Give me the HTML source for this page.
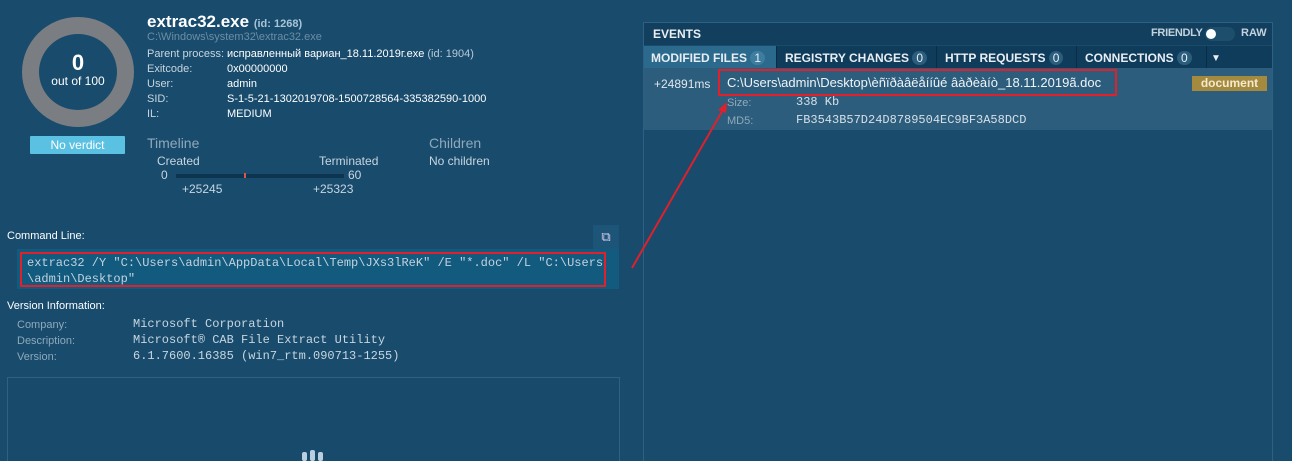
<!DOCTYPE html>
<html><head><meta charset="utf-8"><style>
*{margin:0;padding:0;box-sizing:border-box}
html,body{width:1292px;height:461px;overflow:hidden}
body{background:#184b6c;font-family:"Liberation Sans",sans-serif;color:#fff;position:relative;font-size:12px}
.a{position:absolute;white-space:nowrap}
.m{font-family:"Liberation Mono",monospace}
.lbl{color:#c8d6e0}
.grey{color:#8fa9bb}
</style></head><body>
<div class="a" style="left:22px;top:17px;width:112px;height:110px;border-radius:50%;border:17px solid #7a7e82"></div>
<div class="a" style="left:22px;top:50px;width:112px;text-align:center;font-size:22px;font-weight:bold">0</div>
<div class="a" style="left:22px;top:74px;width:112px;text-align:center;font-size:12px">out of 100</div>
<div class="a" style="left:30px;top:136px;width:95px;height:18px;background:#5bc1e2;text-align:center;font-size:12px;line-height:18px;border-radius:1px">No verdict</div>

<div class="a" style="left:147px;top:12px;font-size:17px;font-weight:bold">extrac32.exe <span style="font-size:11px;color:#a9c4d6">(id: 1268)</span></div>
<div class="a" style="left:147px;top:31px;font-size:11px;color:#6d8ea5">C:\Windows\system32\extrac32.exe</div>
<div class="a lbl" style="left:147px;top:47px;font-size:11px;line-height:15px">Parent process:<br>Exitcode:<br>User:<br>SID:<br>IL:</div>
<div class="a" style="left:227px;top:47px;font-size:11px;line-height:15px">исправленный вариан_18.11.2019г.exe <span style="color:#b8cbd8">(id: 1904)</span><br>0x00000000<br>admin<br>S-1-5-21-1302019708-1500728564-335382590-1000<br>MEDIUM</div>

<div class="a grey" style="left:147px;top:135px;font-size:14px">Timeline</div>
<div class="a grey" style="left:429px;top:135px;font-size:14px">Children</div>
<div class="a lbl" style="left:429px;top:154px;font-size:12px">No children</div>
<div class="a lbl" style="left:157px;top:154px;font-size:12px">Created</div>
<div class="a lbl" style="left:319px;top:154px;font-size:12px">Terminated</div>
<div class="a lbl" style="left:161px;top:168px;font-size:12px">0</div>
<div class="a lbl" style="left:348px;top:168px;font-size:12px">60</div>
<div class="a" style="left:176px;top:174px;width:168px;height:4px;background:#0e3550"></div>
<div class="a" style="left:244px;top:173px;width:2px;height:5px;background:#e0544a"></div>
<div class="a lbl" style="left:182px;top:182px;font-size:12px">+25245</div>
<div class="a lbl" style="left:313px;top:182px;font-size:12px">+25323</div>

<div class="a" style="left:7px;top:230px;font-size:11px">Command Line:</div>
<div class="a" style="left:593px;top:225px;width:26px;height:24px;background:#1c5578;color:#dce;text-align:center;line-height:24px;font-size:13px">⧉</div>
<div class="a" style="left:17px;top:249px;width:602px;height:40px;background:#135b7e"></div>
<div class="a" style="left:20px;top:252px;width:586px;height:35px;border:2px solid #e0202a"></div>
<div class="a m" style="left:27px;top:255px;font-size:12px;line-height:16px;color:#c2d2de">extrac32 /Y "C:\Users\admin\AppData\Local\Temp\JXs3lReK" /E "*.doc" /L "C:\Users<br>\admin\Desktop"</div>

<div class="a" style="left:7px;top:300px;font-size:11px">Version Information:</div>
<div class="a grey" style="left:17px;top:317px;font-size:11px;line-height:16px">Company:<br>Description:<br>Version:</div>
<div class="a m lbl" style="left:133px;top:316px;font-size:12px;line-height:16px">Microsoft Corporation<br>Microsoft® CAB File Extract Utility<br>6.1.7600.16385 (win7_rtm.090713-1255)</div>
<div class="a" style="left:7px;top:377px;width:613px;height:100px;border:1px solid #2d6283;background:#174a6b"></div>
<div class="a" style="left:302px;top:452px;width:5px;height:9px;background:#b9cede;border-radius:2px"></div>
<div class="a" style="left:310px;top:450px;width:5px;height:11px;background:#b9cede;border-radius:2px"></div>
<div class="a" style="left:318px;top:452px;width:5px;height:9px;background:#b9cede;border-radius:2px"></div>

<div class="a" style="left:643px;top:22px;width:630px;height:450px;border:1px solid #2c6183;background:#184b6c"></div>
<div class="a" style="left:644px;top:23px;width:628px;height:22px;background:#133f5e"></div>
<div class="a" style="left:653px;top:27px;font-size:12px;font-weight:bold;color:#e8eef3">EVENTS</div>
<div class="a" style="left:1151px;top:27px;font-size:11px;font-weight:bold;color:#c3d2dc;letter-spacing:-0.3px">FRIENDLY</div>
<div class="a" style="left:1205px;top:27px;width:30px;height:14px;border-radius:7px;background:#1d4f6d"></div>
<div class="a" style="left:1206px;top:29px;width:10px;height:10px;border-radius:50%;background:#fff"></div>
<div class="a" style="left:1241px;top:27px;font-size:11px;font-weight:bold;color:#c3d2dc">RAW</div>
<div class="a" style="left:644px;top:46px;width:628px;height:22px;background:#0f3c5b"></div>
<div class="a" style="left:644px;top:46px;width:132px;height:22px;background:#2b6a8c"></div>
<div class="a" style="left:776px;top:46px;width:1px;height:22px;background:#0a2c44"></div>
<div class="a" style="left:936px;top:46px;width:1px;height:22px;background:#0a2c44"></div>
<div class="a" style="left:1076px;top:46px;width:1px;height:22px;background:#0a2c44"></div>
<div class="a" style="left:1206px;top:46px;width:1px;height:22px;background:#0a2c44"></div>
<div class="a" style="left:651px;top:51px;font-size:12px;font-weight:bold;color:#e8eef3">MODIFIED FILES <span style="display:inline-block;background:#3d7da0;border-radius:7px;padding:0 4px;font-weight:normal">1</span></div>
<div class="a" style="left:785px;top:51px;font-size:12px;font-weight:bold;color:#e8eef3">REGISTRY CHANGES <span style="display:inline-block;background:#2b5d7d;border-radius:7px;padding:0 4px;font-weight:normal">0</span></div>
<div class="a" style="left:945px;top:51px;font-size:12px;font-weight:bold;color:#e8eef3">HTTP REQUESTS <span style="display:inline-block;background:#2b5d7d;border-radius:7px;padding:0 4px;font-weight:normal">0</span></div>
<div class="a" style="left:1085px;top:51px;font-size:12px;font-weight:bold;color:#e8eef3">CONNECTIONS <span style="display:inline-block;background:#2b5d7d;border-radius:7px;padding:0 4px;font-weight:normal">0</span></div>
<div class="a" style="left:1211px;top:53px;font-size:10px;color:#e8eef3">▼</div>
<div class="a" style="left:644px;top:68px;width:628px;height:62px;background:#2d5d7c"></div>
<div class="a" style="left:654px;top:77px;font-size:12px;color:#e0e8ee">+24891ms</div>
<div class="a" style="left:718px;top:69px;width:399px;height:27px;border:2px solid #e0202a"></div>
<div class="a" style="left:727px;top:75px;font-size:13px;color:#f0f4f7">C:\Users\admin\Desktop\èñïðàâëåííûé âàðèàíò_18.11.2019ã.doc</div>
<div class="a" style="left:1192px;top:76px;width:75px;height:15px;background:#a48a3e;text-align:center;font-size:12px;line-height:15px;font-weight:bold;color:#f3ead0">document</div>
<div class="a grey" style="left:727px;top:94px;font-size:11px;line-height:18px">Size:<br>MD5:</div>
<div class="a m" style="left:796px;top:93px;font-size:12px;line-height:18px;color:#d5e0e8">338 Kb<br>FB3543B57D24D8789504EC9BF3A58DCD</div>

<svg class="a" style="left:0;top:0" width="1292" height="461"><line x1="632" y1="268" x2="724" y2="108" stroke="#e0202a" stroke-width="2"/><polygon points="727,102 718,110 726,113" fill="#e0202a"/></svg>
</body></html>
